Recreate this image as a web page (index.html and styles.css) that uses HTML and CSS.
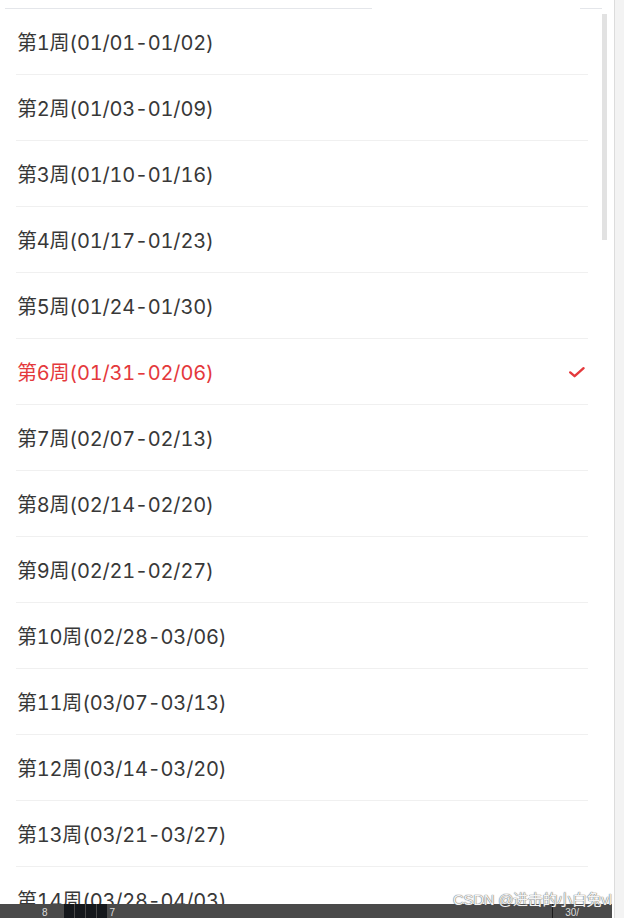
FILE: index.html
```html
<!DOCTYPE html>
<html lang="zh-CN">
<head>
<meta charset="utf-8">
<title>周选择</title>
<link rel="stylesheet" href="styles.css">
</head>
<body>
<div class="page">
  <div class="main">
    <div class="topline">
      <span class="seg seg-a"></span>
      <span class="seg seg-b"></span>
    </div>
    <ul class="weeks">
      <li class="week">第1周(01/01-01/02)</li>
      <li class="week">第2周(01/03-01/09)</li>
      <li class="week">第3周(01/10-01/16)</li>
      <li class="week">第4周(01/17-01/23)</li>
      <li class="week">第5周(01/24-01/30)</li>
      <li class="week active">第6周(01/31-02/06)
        <svg class="check" width="18" height="14" viewBox="0 0 18 14"><path d="M2.2 7.4 L6.6 11.2 L15.6 3.2" fill="none" stroke="#e4393c" stroke-width="2.4" stroke-linecap="round" stroke-linejoin="round"/></svg>
      </li>
      <li class="week">第7周(02/07-02/13)</li>
      <li class="week">第8周(02/14-02/20)</li>
      <li class="week">第9周(02/21-02/27)</li>
      <li class="week">第10周(02/28-03/06)</li>
      <li class="week">第11周(03/07-03/13)</li>
      <li class="week">第12周(03/14-03/20)</li>
      <li class="week">第13周(03/21-03/27)</li>
      <li class="week">第14周(03/28-04/03)</li>
    </ul>
    <div class="scrollthumb"></div>
    <div class="bottombar">
      <span class="bb-num">8</span>
      <span class="bb-blocks"><i></i><i></i><i></i><i></i></span>
      <span class="bb-num2">7</span>
      <span class="bb-sep"></span>
      <span class="bb-pct">30/</span>
    </div>
    <div class="watermark">CSDN @进击的小白兔vl</div>
  </div>
  <div class="rail"></div>
</div>
</body>
</html>
```

FILE: styles.css
```css
html, body {
  margin: 0;
  padding: 0;
  background: #ffffff;
  overflow: hidden;
}
body {
  font-family: Inter, "Noto Sans CJK SC", sans-serif;
  color: #333333;
}
.page {
  display: flex;
  width: 624px;
  height: 918px;
  overflow: hidden;
}
.main {
  position: relative;
  width: 614px;
  height: 918px;
  overflow: hidden;
  background: #ffffff;
}
.rail {
  flex: 1;
  background: #f3f3f3;
  border-left: 1px solid #dcdcdc;
}
.topline {
  height: 8px;
  border-bottom: 1px solid transparent;
  position: relative;
}
.seg {
  position: absolute;
  bottom: -1px;
  height: 1px;
  background: #e4e6ea;
}
.seg-a { left: 5px; width: 367px; }
.seg-b { left: 580px; width: 22px; }
.weeks {
  list-style: none;
  margin: 0;
  padding: 0 0 0 16px;
  width: 572px;
}
.week {
  display: flex;
  align-items: center;
  justify-content: space-between;
  height: 65px;
  border-bottom: 1px solid #f0f0f0;
  font-size: 20px;
  font-weight: 400;
  font-variant-numeric: tabular-nums;
  letter-spacing: -0.2px;
  padding-left: 1px;
  padding-right: 2px;
  color: #383838;
}
.week.active {
  color: #e4393c;
}
.check {
  display: block;
}
.scrollthumb {
  position: absolute;
  left: 602px;
  top: 14px;
  width: 5px;
  height: 226px;
  background: #e2e2e2;
}
.bottombar {
  position: absolute;
  left: 0;
  top: 904px;
  width: 612px;
  height: 14px;
  background: #4a4a4a;
  display: flex;
  align-items: flex-start;
  color: #dddddd;
  font-family: "Liberation Sans", sans-serif;
  font-size: 10px;
  line-height: 10px;
}
.bb-num {
  margin-left: 42px;
  padding-top: 4px;
}
.bb-blocks {
  display: flex;
  gap: 1px;
  margin-left: 16px;
  height: 14px;
}
.bb-blocks i {
  display: block;
  width: 10px;
  height: 14px;
  background: #15181c;
}
.bb-num2 {
  margin-left: 3px;
  padding-top: 4px;
}
.bb-sep {
  margin-left: 437px;
  width: 1px;
  height: 14px;
  background: #1a1a1a;
}
.bb-pct {
  margin-left: 12px;
  padding-top: 4px;
}
.watermark {
  position: absolute;
  left: 453px;
  top: 890px;
  font-family: "Liberation Sans", "Noto Sans CJK SC", sans-serif;
  font-size: 15px;
  line-height: 20px;
  color: #f4f4f4;
  text-shadow: 0 0 1px #666, 0 0 1px #666;
  letter-spacing: -0.3px;
}
```
